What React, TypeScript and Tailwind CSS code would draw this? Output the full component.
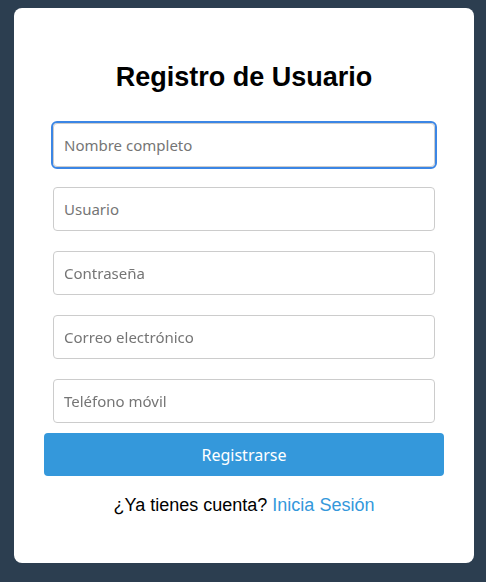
import { useState } from 'react';

const FIELDS = [
  { name: 'nombre', placeholder: 'Nombre completo', type: 'text' },
  { name: 'usuario', placeholder: 'Usuario', type: 'text' },
  { name: 'password', placeholder: 'Contraseña', type: 'password' },
  { name: 'correo', placeholder: 'Correo electrónico', type: 'email' },
  { name: 'telefono', placeholder: 'Teléfono móvil', type: 'tel' },
];

export default function App() {
  const [values, setValues] = useState<Record<string, string>>({});

  return (
    <div className="min-h-screen bg-[#2c3e50] pt-[8px] pl-[14px]">
      <div className="w-[460px] h-[555px] bg-white rounded-[8px] px-[30px] pt-[53px]">
        <h2 className="text-center text-[27px] leading-[32px] font-bold text-black font-['Liberation_Sans',Arial,sans-serif]">
          Registro de Usuario
        </h2>

        <form className="mt-[30px] flex flex-col" onSubmit={(e) => e.preventDefault()}>
          <div className="flex flex-col items-center gap-[20px]">
            {FIELDS.map((f, i) => (
              <input
                key={f.name}
                type={f.type}
                autoFocus={i === 0}
                placeholder={f.placeholder}
                value={values[f.name] ?? ''}
                onChange={(e) => setValues({ ...values, [f.name]: e.target.value })}
                className={`w-[382px] h-[44px] px-[10px] border border-[#cccccc] rounded-[4px] bg-white text-[15px] text-[#333] placeholder:text-[#757575] font-['Noto_Sans','Open_Sans',sans-serif] ${
                  i === 0 ? 'outline-2 outline-[#3b86e5]' : 'outline-none'
                }`}
              />
            ))}
          </div>

          <button
            type="submit"
            className="mt-[10px] h-[43px] w-full bg-[#3498db] rounded-[4px] text-white text-[16px] font-['Noto_Sans','Open_Sans',sans-serif]"
          >
            Registrarse
          </button>
        </form>

        <p className="mt-[19px] text-center text-[18px] leading-[21px] text-black font-['Liberation_Sans',Arial,sans-serif]">
          ¿Ya tienes cuenta?{' '}
          <a href="#" className="text-[#3498db]">
            Inicia Sesión
          </a>
        </p>
      </div>
    </div>
  );
}
